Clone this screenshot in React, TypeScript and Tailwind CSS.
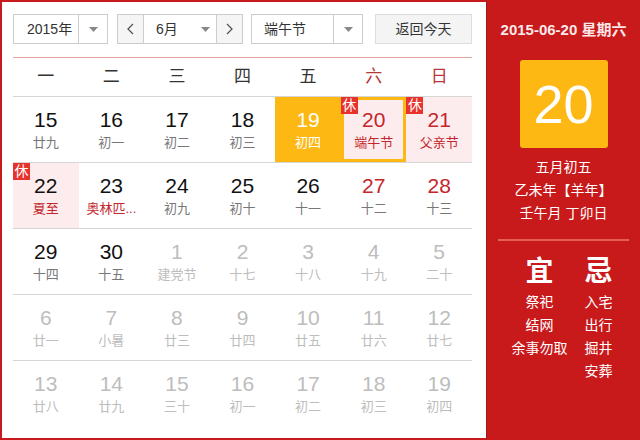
import React from "react";

type Day = {
  n: number;
  lunar: string;
  kind?: "cur" | "weekend" | "other";
  today?: boolean;
  selected?: boolean;
  rest?: boolean;
  fest?: boolean;
};

const rows: Day[][] = [
  [
    { n: 15, lunar: "廿九" },
    { n: 16, lunar: "初一" },
    { n: 17, lunar: "初二" },
    { n: 18, lunar: "初三" },
    { n: 19, lunar: "初四", today: true },
    { n: 20, lunar: "端午节", kind: "weekend", selected: true, rest: true, fest: true },
    { n: 21, lunar: "父亲节", kind: "weekend", rest: true, fest: true },
  ],
  [
    { n: 22, lunar: "夏至", rest: true, fest: true },
    { n: 23, lunar: "奥林匹...", fest: true },
    { n: 24, lunar: "初九" },
    { n: 25, lunar: "初十" },
    { n: 26, lunar: "十一" },
    { n: 27, lunar: "十二", kind: "weekend" },
    { n: 28, lunar: "十三", kind: "weekend" },
  ],
  [
    { n: 29, lunar: "十四" },
    { n: 30, lunar: "十五" },
    { n: 1, lunar: "建党节", kind: "other" },
    { n: 2, lunar: "十七", kind: "other" },
    { n: 3, lunar: "十八", kind: "other" },
    { n: 4, lunar: "十九", kind: "other" },
    { n: 5, lunar: "二十", kind: "other" },
  ],
  [
    { n: 6, lunar: "廿一", kind: "other" },
    { n: 7, lunar: "小暑", kind: "other" },
    { n: 8, lunar: "廿三", kind: "other" },
    { n: 9, lunar: "廿四", kind: "other" },
    { n: 10, lunar: "廿五", kind: "other" },
    { n: 11, lunar: "廿六", kind: "other" },
    { n: 12, lunar: "廿七", kind: "other" },
  ],
  [
    { n: 13, lunar: "廿八", kind: "other" },
    { n: 14, lunar: "廿九", kind: "other" },
    { n: 15, lunar: "三十", kind: "other" },
    { n: 16, lunar: "初一", kind: "other" },
    { n: 17, lunar: "初二", kind: "other" },
    { n: 18, lunar: "初三", kind: "other" },
    { n: 19, lunar: "初四", kind: "other" },
  ],
];

const weekdays = ["一", "二", "三", "四", "五", "六", "日"];

function Caret() {
  return (
    <svg width="9" height="5" viewBox="0 0 9 5">
      <path d="M0 0h9L4.5 5z" fill="#888" />
    </svg>
  );
}

function Chevron({ dir }: { dir: "l" | "r" }) {
  return (
    <svg width="7" height="12" viewBox="0 0 7 12">
      <path
        d={dir === "l" ? "M6 1L1 6l5 5" : "M1 1l5 5-5 5"}
        stroke="#555"
        strokeWidth="1.3"
        fill="none"
      />
    </svg>
  );
}

function Cell({ d }: { d: Day }) {
  let bg = "";
  let num = "text-[#111]";
  let lun = "text-[#777]";
  if (d.rest) bg = "bg-[#fdeced]";
  if (d.kind === "weekend") num = "text-[#c4262b]";
  if (d.fest) lun = "text-[#c4262b]";
  if (d.kind === "other") {
    num = "text-[#bdbdbd]";
    lun = "text-[#bdbdbd]";
  }
  if (d.today) {
    bg = "bg-[#fdb813]";
    num = "text-white";
    lun = "text-white";
  }
  return (
    <div className={`relative flex flex-col items-center justify-center h-[65px] ${bg}`}>
      {d.selected && (
        <div className="absolute inset-0 border-[3px] border-[#fdb813]" />
      )}
      {d.rest && (
        <div className="absolute left-0 top-0 w-[17px] h-[17px] bg-[#e8322d] text-white text-[14px] leading-[17px] text-center">
          休
        </div>
      )}
      <div className={`text-[21px] leading-[24px] ${num}`}>{d.n}</div>
      <div className={`text-[13px] leading-[18px] mt-[2px] ${lun}`}>{d.lunar}</div>
    </div>
  );
}

export default function App() {
  return (
    <div
      className="w-[640px] h-[440px] flex overflow-hidden bg-white"
      style={{ fontFamily: '"Liberation Sans", "Noto Sans CJK SC", sans-serif' }}
    >
      <div className="w-[487px] h-[440px] border-2 border-r border-[#c8191b] border-r-[#9a1a1a] pl-[11px] pr-[13px] pt-[12px]">
        <div className="flex items-center h-[30px] text-[14px] text-[#333]">
          <div className="flex h-[30px] w-[95px] border border-[#ccc] bg-white">
            <div className="flex-1 flex items-center pl-[13px]">2015年</div>
            <div className="w-[29px] border-l border-[#ccc] flex items-center justify-center">
              <Caret />
            </div>
          </div>
          <div className="flex h-[30px] w-[126px] ml-[9px] border border-[#ccc] bg-white">
            <div className="w-[26px] bg-[#f5f5f5] border-r border-[#ccc] flex items-center justify-center">
              <Chevron dir="l" />
            </div>
            <div className="flex-1 flex items-center pl-[12px]">6月</div>
            <div className="w-[22px] flex items-center justify-center">
              <Caret />
            </div>
            <div className="w-[26px] bg-[#f5f5f5] border-l border-[#ccc] flex items-center justify-center">
              <Chevron dir="r" />
            </div>
          </div>
          <div className="flex h-[30px] w-[112px] ml-[8px] border border-[#ccc] bg-white">
            <div className="flex-1 flex items-center pl-[12px]">端午节</div>
            <div className="w-[29px] border-l border-[#ccc] flex items-center justify-center">
              <Caret />
            </div>
          </div>
          <div className="h-[30px] w-[97px] ml-[12px] border border-[#ddd] bg-[#f4f4f4] flex items-center justify-center">
            返回今天
          </div>
        </div>

        <div className="mt-[13px] w-[459px] border-t border-[#e2a59c]">
          <div className="grid grid-cols-7 h-[39px] items-center border-b border-[#d6d6d6] text-[17px]">
            {weekdays.map((w, i) => (
              <div
                key={w}
                className={`text-center ${i >= 5 ? "text-[#b5373a]" : "text-[#333]"}`}
              >
                {w}
              </div>
            ))}
          </div>
          {rows.map((r, ri) => (
            <div
              key={ri}
              className={`grid grid-cols-7 ${ri < rows.length - 1 ? "border-b border-[#d6d6d6]" : ""}`}
            >
              {r.map((d, di) => (
                <Cell key={di} d={d} />
              ))}
            </div>
          ))}
        </div>
      </div>

      <div className="flex-1 bg-[#c8191b] flex flex-col items-center text-white">
        <div className="mt-[20px] text-[15px] leading-[20px] font-bold text-[#fbe9e9]">
          2015-06-20 星期六
        </div>
        <div className="mt-[20px] w-[88px] h-[88px] rounded-[3px] bg-[#fdb813] flex items-center justify-center text-[54px] leading-none">
          20
        </div>
        <div className="mt-[8px] text-[14px] leading-[23px] text-center">
          <div>五月初五</div>
          <div>乙未年【羊年】</div>
          <div>壬午月 丁卯日</div>
        </div>
        <div className="mt-[14px] w-[131px] h-[2px] bg-[#e5604f]" />
        <div className="mt-[14px] flex gap-[8px]">
          <div className="flex flex-col items-center w-[62px]">
            <div className="text-[28px] leading-[34px] font-bold">宜</div>
            <div className="mt-[2px] text-[14px] leading-[23px] text-center">
              <div>祭祀</div>
              <div>结网</div>
              <div>余事勿取</div>
            </div>
          </div>
          <div className="flex flex-col items-center w-[40px]">
            <div className="text-[28px] leading-[34px] font-bold">忌</div>
            <div className="mt-[2px] text-[14px] leading-[23px] text-center">
              <div>入宅</div>
              <div>出行</div>
              <div>掘井</div>
              <div>安葬</div>
            </div>
          </div>
        </div>
      </div>
    </div>
  );
}
